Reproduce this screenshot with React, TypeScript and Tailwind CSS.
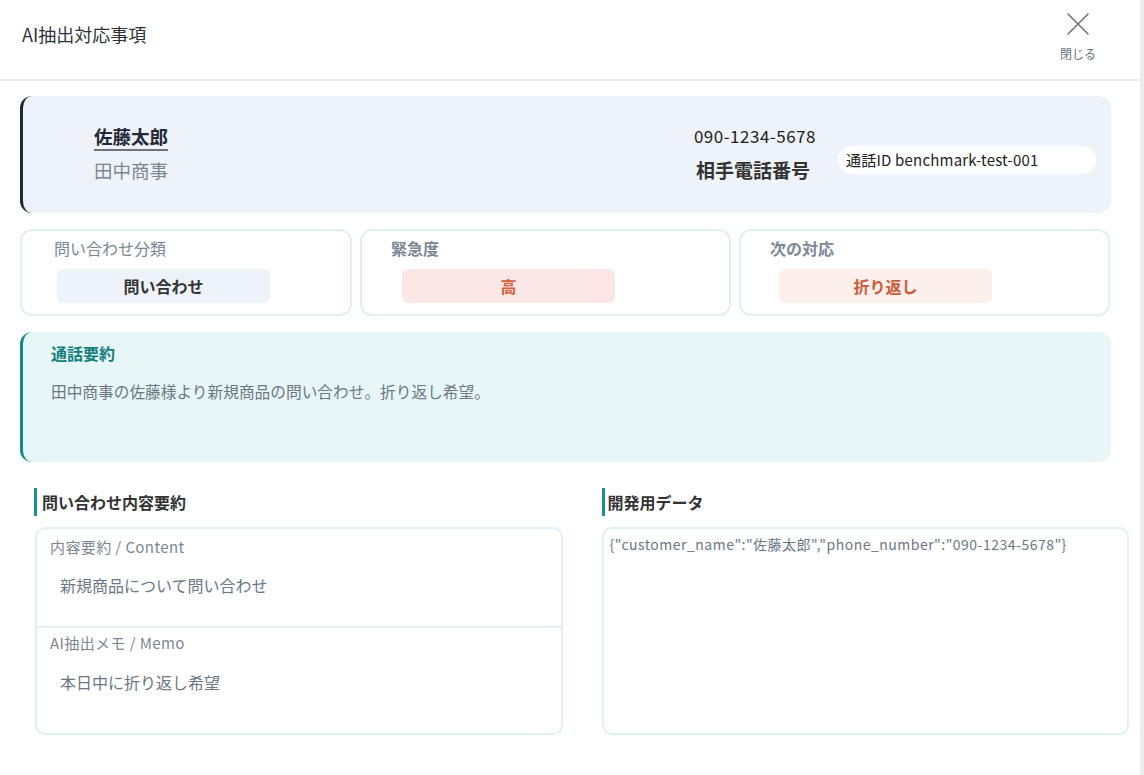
import React from "react";

const font = { fontFamily: '"Noto Sans CJK JP", "Noto Sans", sans-serif' };

function CloseIcon() {
  return (
    <svg width="26" height="26" viewBox="0 0 26 26" fill="none">
      <path d="M3 3 L23 23 M23 3 L3 23" stroke="#6b7280" strokeWidth="1.6" strokeLinecap="round" />
    </svg>
  );
}

export default function App() {
  return (
    <div className="flex w-[1144px] h-[775px] bg-white overflow-hidden" style={font}>
      <div className="flex-1 flex flex-col">
        {/* Header */}
        <div className="h-[81px] shrink-0 flex items-start justify-between border-b-2 border-[#e3eaee] pl-[22px] pr-[44px]">
          <div className="pt-[22px] text-[18px] leading-[24px] text-[#2d3338]">AI抽出対応事項</div>
          <div className="flex flex-col items-center pt-[11px]">
            <CloseIcon />
            <div className="mt-[9px] text-[12px] leading-[16px] text-[#6b7280]">閉じる</div>
          </div>
        </div>

        <div className="px-[20px] pt-[15px]">
          {/* Customer card */}
          <div className="h-[117px] w-[1091px] flex justify-between rounded-[12px] border-l-[3px] border-[#1e2a36] bg-[#eef3f9] pr-[15px]">
            <div className="pl-[71px] pt-[28px] flex flex-col">
              <div className="text-[18.5px] leading-[24px] font-bold text-[#1f2937] underline decoration-[#6b7280] decoration-[1.5px] underline-offset-[5px]">佐藤太郎</div>
              <div className="mt-[10px] text-[18.5px] leading-[24px] text-[#7b8794]">田中商事</div>
            </div>
            <div className="flex items-start pt-[29px]">
              <div className="flex flex-col">
                <div className="text-[17px] leading-[22px] tracking-[0.5px] text-[#222]">090-1234-5678</div>
                <div className="mt-[10px] pl-[2px] text-[19px] leading-[26px] font-bold text-[#333]">相手電話番号</div>
              </div>
              <div className="ml-[22px] mt-[21px] w-[258px] h-[28px] rounded-full bg-white flex items-center pl-[8px] text-[15px] tracking-[0.2px] text-[#222]">
                通話ID benchmark-test-001
              </div>
            </div>
          </div>

          {/* Three cards */}
          <div className="mt-[16px] w-[1091px] grid grid-cols-[332px_371px_371px] gap-[8px]">
            <div className="h-[87px] rounded-[12px] border-2 border-[#e0f1f3] pt-[6px]">
              <div className="pl-[32px] text-[16px] leading-[22px] text-[#7b8794]">問い合わせ分類</div>
              <div className="ml-[35px] mt-[10px] w-[213px] h-[34px] rounded-[6px] bg-[#eef3f9] flex items-center justify-center text-[16px] font-bold text-[#333]">問い合わせ</div>
            </div>
            <div className="h-[87px] rounded-[12px] border-2 border-[#e0f1f3] pt-[6px]">
              <div className="pl-[29px] text-[16px] leading-[22px] text-[#7b8794] font-bold">緊急度</div>
              <div className="ml-[40px] mt-[10px] w-[213px] h-[34px] rounded-[6px] bg-[#fce7e7] flex items-center justify-center text-[16px] font-bold text-[#d4603a]">高</div>
            </div>
            <div className="h-[87px] rounded-[12px] border-2 border-[#e0f1f3] pt-[6px]">
              <div className="pl-[29px] text-[16px] leading-[22px] text-[#7b8794] font-bold">次の対応</div>
              <div className="ml-[38px] mt-[10px] w-[213px] h-[34px] rounded-[6px] bg-[#fdf0eb] flex items-center justify-center text-[16px] font-bold text-[#cf5a38]">折り返し</div>
            </div>
          </div>

          {/* Summary */}
          <div className="mt-[16px] w-[1091px] h-[130px] rounded-[12px] border-l-[3px] border-[#128a8a] bg-[#e7f7f8] pl-[28px] pt-[10px]">
            <div className="text-[16px] leading-[22px] font-bold text-[#137f7f]">通話要約</div>
            <div className="mt-[17px] text-[15.7px] leading-[22px] text-[#6b7785]">田中商事の佐藤様より新規商品の問い合わせ。折り返し希望。</div>
          </div>
        </div>

        {/* Bottom section */}
        <div className="mt-[26px] pl-[35px] pr-[11px] grid grid-cols-2 gap-[39px]">
          <div className="flex flex-col">
            <div className="flex items-center h-[28px] border-l-[3px] border-[#1a9090] -ml-[1px] pl-[5px] text-[16px] font-bold text-[#333]">問い合わせ内容要約</div>
            <div className="mt-[11px] h-[208px] rounded-[10px] border-2 border-[#e0f1f3] flex flex-col">
              <div className="h-[99px] border-b-2 border-[#e3f2f4]">
                <div className="pl-[13px] pt-[8px] text-[15px] leading-[20px] tracking-[0.4px] text-[#7b8794]">内容要約 / Content</div>
                <div className="pl-[23px] mt-[17px] text-[16px] leading-[22px] text-[#6b7785]">新規商品について問い合わせ</div>
              </div>
              <div>
                <div className="pl-[13px] pt-[5px] text-[15px] leading-[20px] tracking-[0.4px] text-[#7b8794]">AI抽出メモ / Memo</div>
                <div className="pl-[23px] mt-[18px] text-[16px] leading-[22px] text-[#6b7785]">本日中に折り返し希望</div>
              </div>
            </div>
          </div>
          <div className="flex flex-col">
            <div className="flex items-center h-[28px] border-l-[3px] border-[#1a9090] pl-[3px] text-[16px] font-bold text-[#333]">開発用データ</div>
            <div className="mt-[11px] h-[208px] rounded-[10px] border-2 border-[#e0f1f3] pl-[6px] pt-[5px] text-[14px] leading-[20px] tracking-[0.5px] text-[#6b7785]">
              {'{"customer_name":"佐藤太郎","phone_number":"090-1234-5678"}'}
            </div>
          </div>
        </div>
      </div>
      <div className="w-[4px] h-full bg-[#ececec]" />
    </div>
  );
}
